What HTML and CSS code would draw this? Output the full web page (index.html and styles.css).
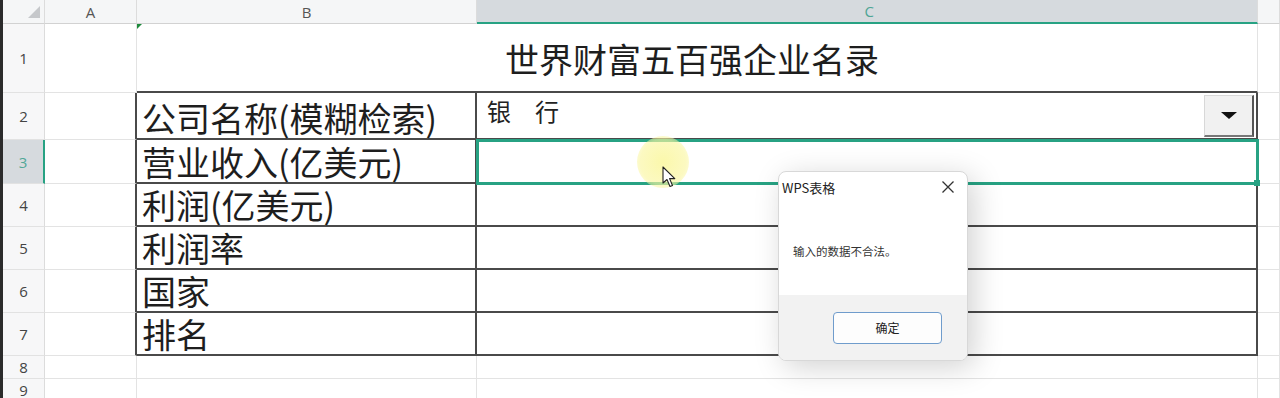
FILE: index.html
```html
<!DOCTYPE html>
<html lang="zh-CN">
<head>
    <meta charset="UTF-8">
    <title>世界财富五百强企业名录 - WPS表格</title>
    <link rel="stylesheet" href="styles.css">
</head>
<body>
    <div class="sheet">
        <div class="corner"><span class="corner-mark"></span></div>
        <div class="colhead">A</div>
        <div class="colhead">B</div>
        <div class="colhead active">C</div>
        <div class="colhead"></div>

        <div class="rowhead">1</div>
        <div class="cell"></div>
        <div class="cell title"><span class="note-mark"></span>世界财富五百强企业名录</div>
        <div class="cell"></div>

        <div class="rowhead">2</div>
        <div class="cell edge"></div>
        <div class="cell label">公司名称(模糊检索)</div>
        <div class="cell value">
            <span class="value-text">银　行</span>
            <span class="dropdown"><span class="arrow"></span></span>
        </div>
        <div class="cell"></div>

        <div class="rowhead active">3</div>
        <div class="cell edge"></div>
        <div class="cell label">营业收入(亿美元)</div>
        <div class="cell value selected"><span class="fill-handle"></span></div>
        <div class="cell"></div>

        <div class="rowhead">4</div>
        <div class="cell edge"></div>
        <div class="cell label">利润(亿美元)</div>
        <div class="cell value"></div>
        <div class="cell"></div>

        <div class="rowhead">5</div>
        <div class="cell edge"></div>
        <div class="cell label">利润率</div>
        <div class="cell value"></div>
        <div class="cell"></div>

        <div class="rowhead">6</div>
        <div class="cell edge"></div>
        <div class="cell label">国家</div>
        <div class="cell value"></div>
        <div class="cell"></div>

        <div class="rowhead">7</div>
        <div class="cell edge"></div>
        <div class="cell label">排名</div>
        <div class="cell value"></div>
        <div class="cell"></div>

        <div class="rowhead">8</div>
        <div class="cell"></div>
        <div class="cell"></div>
        <div class="cell"></div>
        <div class="cell"></div>

        <div class="rowhead">9</div>
        <div class="cell"></div>
        <div class="cell"></div>
        <div class="cell"></div>
        <div class="cell"></div>
    </div>

    <div class="pointer">
        <span class="halo"></span>
        <svg class="cursor" width="14" height="22" viewBox="0 0 14 22">
            <path d="M1 1 L1 17 L5 13.5 L8 20.5 L10.5 19.5 L7.6 12.6 L12.8 12.6 Z" fill="#fff" stroke="#222" stroke-width="1.1" stroke-linejoin="round"/>
        </svg>
    </div>

    <div class="dialog">
        <div class="dialog-head">
            <span class="dialog-title">WPS表格</span>
            <svg class="dialog-close" width="14" height="14" viewBox="0 0 14 14">
                <path d="M1.5 1.5 L12.5 12.5 M12.5 1.5 L1.5 12.5" stroke="#333" stroke-width="1.3" fill="none"/>
            </svg>
        </div>
        <div class="dialog-body">输入的数据不合法。</div>
        <div class="dialog-foot">
            <button class="ok">确定</button>
        </div>
    </div>
</body>
</html>
```

FILE: styles.css
```css
*
{
    box-sizing: border-box;
}
body
{
    margin: 0;
    background: #fff;
    font-family: "Noto Sans CJK SC", "Noto Sans", sans-serif;
    color: #222;
    overflow: hidden;
    height: 398px;
}
.sheet
{
    display: grid;
    grid-template-columns: 42px 92px 340px 781px 1fr;
    grid-template-rows: 24px 69px 47px 44px 43px 43px 43px 43px 23px 23px;
    border-left: 3px solid #2b2b2b;
    width: 1280px;
}
.corner,
.colhead
{
    background: #f5f6f7;
    border-right: 1px solid #dcdcdc;
    border-bottom: 1px solid #d2d2d2;
    display: flex;
    align-items: center;
    justify-content: center;
    font-family: "Open Sans", "Noto Sans", sans-serif;
    font-size: 15px;
    color: #555;
}
.corner
{
    position: relative;
}
.corner-mark
{
    position: absolute;
    right: 4px;
    bottom: 5px;
    width: 0;
    height: 0;
    border-left: 12px solid transparent;
    border-bottom: 12px solid #c6c8cb;
}
.colhead.active
{
    background: #d6dade;
    color: #4fa595;
    border-bottom: 2px solid #27a283;
    justify-content: flex-end;
    padding-right: 383px;
}
.rowhead
{
    background: #f7f7f8;
    border-right: 1px solid #dcdcdc;
    border-bottom: 1px solid #e2e2e2;
    display: flex;
    align-items: center;
    justify-content: center;
    font-family: "Open Sans", "Noto Sans", sans-serif;
    font-size: 15px;
    color: #444;
}
.rowhead.active
{
    background: #d6dade;
    color: #52a898;
    border-right: 2px solid #27a283;
}
.cell
{
    border-right: 1px solid #e3e3e3;
    border-bottom: 1px solid #e3e3e3;
    position: relative;
}
.cell.edge
{
    border-right: 2px solid #4a4a4a;
}
.title
{
    grid-column: span 2;
    border-bottom: 2px solid #4a4a4a;
    display: flex;
    align-items: flex-end;
    justify-content: center;
    font-size: 34px;
    line-height: 1;
    padding-bottom: 15px;
    padding-right: 10px;
    color: #1e1e1e;
}
.note-mark
{
    position: absolute;
    left: 0;
    top: 0;
    width: 0;
    height: 0;
    border-top: 5px solid #1e8a3c;
    border-right: 5px solid transparent;
}
.label
{
    border-right: 2px solid #4a4a4a;
    border-bottom: 2px solid #4a4a4a;
    display: flex;
    align-items: flex-end;
    padding-left: 5px;
    padding-bottom: 3px;
    font-size: 34px;
    line-height: 34px;
    white-space: nowrap;
    color: #1e1e1e;
}
.value
{
    border-right: 2px solid #4a4a4a;
    border-bottom: 2px solid #4a4a4a;
}
.value-text
{
    display: block;
    padding: 4px 0 0 10px;
    font-size: 24px;
    line-height: 28px;
    color: #222;
}
.dropdown
{
    position: absolute;
    right: 2px;
    top: 2px;
    width: 50px;
    height: 42px;
    background: #f1f1f1;
    border-top: 1px solid #d8d8d8;
    border-left: 1px solid #d8d8d8;
    border-right: 2px solid #555;
    border-bottom: 2px solid #777;
    display: flex;
    align-items: center;
    justify-content: center;
}
.arrow
{
    width: 0;
    height: 0;
    border-left: 8px solid transparent;
    border-right: 8px solid transparent;
    border-top: 7px solid #111;
}
.selected
{
    outline: 3px solid #27a283;
    outline-offset: -2px;
    z-index: 1;
}
.fill-handle
{
    position: absolute;
    right: -4px;
    bottom: -4px;
    width: 6px;
    height: 6px;
    background: #27a283;
}
.pointer
{
    position: absolute;
    left: 637px;
    top: 136px;
    width: 52px;
    height: 52px;
    z-index: 3;
}
.halo
{
    position: absolute;
    inset: 0;
    border-radius: 50%;
    background: radial-gradient(circle, rgba(250, 246, 150, 0.8) 0%, rgba(250, 246, 160, 0.65) 62%, rgba(250, 248, 180, 0) 100%);
}
.cursor
{
    position: absolute;
    left: 25px;
    top: 30px;
}
.dialog
{
    position: absolute;
    left: 778px;
    top: 171px;
    width: 190px;
    height: 190px;
    background: #fff;
    border: 1px solid #d8d8d8;
    border-radius: 8px;
    box-shadow: 6px 6px 30px rgba(0, 0, 0, 0.18);
    display: flex;
    flex-direction: column;
    overflow: hidden;
    z-index: 4;
    font-family: "Noto Sans CJK SC", sans-serif;
    color: #222;
}
.dialog-head
{
    display: flex;
    align-items: center;
    justify-content: space-between;
    padding: 2px 12px 0 3px;
    height: 28px;
    font-size: 13px;
}
.dialog-body
{
    flex: 1;
    padding: 43px 0 0 14px;
    font-size: 11.5px;
    color: #333;
}
.dialog-foot
{
    height: 65px;
    background: #f2f2f2;
    display: flex;
    justify-content: flex-end;
    align-items: center;
    padding-right: 25px;
}
.ok
{
    width: 109px;
    height: 32px;
    background: #fdfdfd;
    border: 1.5px solid #6f9ccc;
    border-radius: 4px;
    font-family: inherit;
    font-size: 12px;
    color: #222;
    cursor: pointer;
}
```
